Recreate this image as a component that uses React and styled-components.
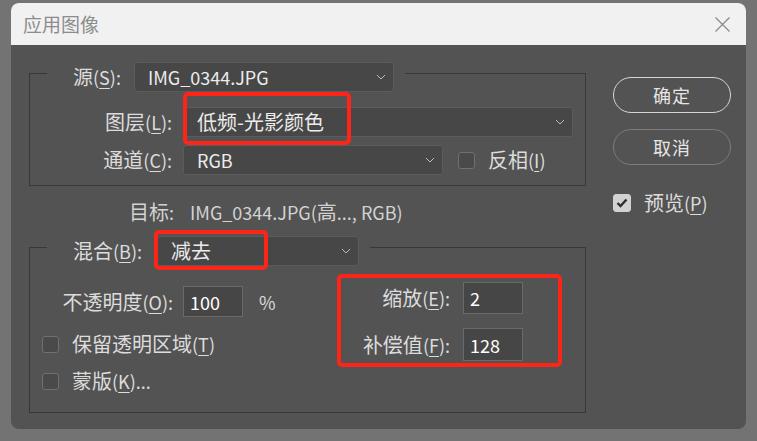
import React from 'react';
import styled, { createGlobalStyle } from 'styled-components';

const GlobalStyle = createGlobalStyle`
    * { box-sizing: border-box; }
    body {
        margin: 0;
        background-color: #737373;
        font-family: "Noto Sans CJK SC", "Noto Sans", sans-serif;
    }
`;

const Page = styled.div`
    width: 757px;
    height: 441px;
    padding: 3px 0 0 11px;
    background-color: #737373;
`;

const Dialog = styled.div`
    width: 735px;
    height: 426px;
    border-radius: 8px;
    overflow: hidden;
    background-color: #535353;
    display: flex;
    flex-direction: column;
`;

const TitleBar = styled.div`
    height: 42px;
    flex: none;
    background-color: #f1f1f1;
    display: flex;
    align-items: center;
    justify-content: space-between;
    padding: 0 16px 0 12px;
    .title {
        font-size: 19px;
        line-height: 24px;
        color: #8c8c8c;
    }
`;

const Body = styled.div`
    flex: 1;
    display: flex;
    padding-left: 18px;
    color: #dcdcdc;
    font-size: 18px;
    line-height: 24px;
`;

/* CJK glyphs run wider than the latin ones in the original */
const Han = styled.span`
    font-size: 20px;
`;

const LeftColumn = styled.div`
    width: 557px;
    display: flex;
    flex-direction: column;
`;

const RightColumn = styled.div`
    width: 118px;
    margin-left: 27px;
    padding-top: 32px;
    display: flex;
    flex-direction: column;
`;

const Group = styled.div`
    border: 1px solid #383838;
    height: ${p => p.$height}px;
    margin-top: ${p => p.$top}px;
    display: flex;
    flex-direction: column;
`;

const GroupHeader = styled.div`
    display: flex;
    align-items: center;
    gap: ${p => p.$gap || 13}px;
    height: 30px;
    width: fit-content;
    margin: -12px 0 0 17px;
    padding: 0 11px 0 26px;
    background-color: #535353;
`;

const Row = styled.div`
    display: grid;
    grid-template-columns: ${p => p.$label}px auto auto;
    column-gap: ${p => p.$gap || 11}px;
    align-items: center;
    justify-content: start;
    margin-top: ${p => p.$top || 0}px;
    .label {
        text-align: right;
        white-space: nowrap;
    }
`;

const Key = styled.u`
    text-underline-offset: 3px;
    text-decoration-thickness: 1px;
`;

const SelectBox = styled.div`
    position: relative;
    width: ${p => p.$width}px;
    height: 30px;
    background-color: #474747;
    border: 1px solid #5b5b5b;
    border-radius: 3px;
    display: flex;
    align-items: center;
    justify-content: space-between;
    padding: 0 7px 0 13px;
    color: #ececec;
    svg { flex: none; }
`;

const Mark = styled.div`
    position: absolute;
    left: ${p => p.$x}px;
    top: ${p => p.$y}px;
    width: ${p => p.$w}px;
    height: ${p => p.$h}px;
    border: 4px solid #ff2418;
    border-radius: 5px;
    pointer-events: none;
`;

const Input = styled.div`
    width: 60px;
    height: ${p => p.$height || 31}px;
    background-color: #464646;
    border: 1px solid #6a6a6a;
    color: #ffffff;
    padding-left: 6px;
    display: flex;
    align-items: center;
`;

const CheckRow = styled.label`
    display: flex;
    align-items: center;
    gap: 13px;
    margin-top: ${p => p.$top || 0}px;
    margin-left: ${p => p.$left || 0}px;
    height: 20px;
`;

const Box = styled.span`
    width: ${p => p.$size || 17}px;
    height: ${p => p.$size || 17}px;
    flex: none;
    border-radius: 3px;
    border: 1px solid ${p => (p.$checked ? '#d2d2d2' : '#707070')};
    background-color: ${p => (p.$checked ? '#d2d2d2' : '#4a4a4a')};
    display: flex;
    align-items: center;
    justify-content: center;
`;

const TargetRow = styled.div`
    display: flex;
    gap: 16px;
    margin-top: 14px;
    padding-left: 100px;
    height: 24px;
    color: #d2d2d2;
`;

const GroupBody = styled.div`
    display: flex;
    align-items: flex-start;
    padding-left: 12px;
`;

const SubColumn = styled.div`
    width: ${p => p.$width}px;
    display: flex;
    flex-direction: column;
    margin-top: ${p => p.$top}px;
`;

const Percent = styled.span`
    margin-left: 6px;
`;

const Frame = styled.div`
    width: 225px;
    border: 4px solid #ff2418;
    border-radius: 5px;
    margin-top: 8px;
    padding: 4px 0 2px;
    display: flex;
    flex-direction: column;
    gap: 14px;
`;

const Button = styled.div`
    height: 36px;
    border-radius: 18px;
    border: 1.5px solid ${p => (p.$primary ? '#d6d6d6' : '#7c7c7c')};
    display: flex;
    align-items: center;
    justify-content: center;
    color: #e6e6e6;
    font-size: 18px;
    letter-spacing: 1px;
    margin-bottom: ${p => p.$bottom || 0}px;
`;

const Chevron = () => (
    <svg width="10" height="6" viewBox="0 0 10 6">
        <path d="M1 1 L5 5 L9 1" fill="none" stroke="#bcbcbc" strokeWidth="1" />
    </svg>
);

const Close = () => (
    <svg width="15" height="15" viewBox="0 0 15 15">
        <path d="M0.5 0.5 L14.5 14.5 M14.5 0.5 L0.5 14.5" stroke="#8a8a8a" strokeWidth="1.3" />
    </svg>
);

const Tick = () => (
    <svg width="12" height="10" viewBox="0 0 12 10">
        <path d="M1.5 5 L4.5 8 L10.5 1.5" fill="none" stroke="#2e2e2e" strokeWidth="2.4" />
    </svg>
);

const Select = ({ width, children, mark }) => (
    <SelectBox $width={width}>
        <span>{children}</span>
        <Chevron />
        {mark && <Mark $x={mark[0]} $y={mark[1]} $w={mark[2]} $h={mark[3]} />}
    </SelectBox>
);

const App = () => {
    return (
        <Page>
            <GlobalStyle />
            <Dialog>
                <TitleBar>
                    <span className="title">应用图像</span>
                    <Close />
                </TitleBar>
                <Body>
                    <LeftColumn>
                        <Group $top={28} $height={113}>
                            <GroupHeader>
                                <span><Han>源</Han>(<Key>S</Key>):</span>
                                <Select width={260}>IMG_0344.JPG</Select>
                            </GroupHeader>
                            <Row $label={142} $top={15}>
                                <span className="label"><Han>图层</Han>(<Key>L</Key>):</span>
                                <Select width={390} mark={[-1, -16, 168, 53]}>
                                    <Han>低频-光影颜色</Han>
                                </Select>
                            </Row>
                            <Row $label={142} $top={8}>
                                <span className="label"><Han>通道</Han>(<Key>C</Key>):</span>
                                <Select width={260}>RGB</Select>
                                <CheckRow $left={4}>
                                    <Box />
                                    <span><Han>反相</Han>(<Key>I</Key>)</span>
                                </CheckRow>
                            </Row>
                        </Group>

                        <TargetRow>
                            <span><Han>目标</Han>:</span>
                            <span>IMG_0344.JPG(<Han>高</Han>..., RGB)</span>
                        </TargetRow>

                        <Group $top={23} $height={166}>
                            <GroupHeader $gap={15}>
                                <span><Han>混合</Han>(<Key>B</Key>):</span>
                                <Select width={202} mark={[-4, -7, 114, 40]}>
                                    <Han>减去</Han>
                                </Select>
                            </GroupHeader>
                            <GroupBody>
                                <SubColumn $width={295} $top={20}>
                                    <Row $label={131} $gap={10}>
                                        <span className="label"><Han>不透明度</Han>(<Key>O</Key>):</span>
                                        <Input>100</Input>
                                        <Percent>%</Percent>
                                    </Row>
                                    <CheckRow $top={17}>
                                        <Box />
                                        <span><Han>保留透明区域</Han>(<Key>T</Key>)</span>
                                    </CheckRow>
                                    <CheckRow $top={17}>
                                        <Box />
                                        <span><Han>蒙版</Han>(<Key>K</Key>)...</span>
                                    </CheckRow>
                                </SubColumn>
                                <Frame>
                                    <Row $label={109} $gap={13}>
                                        <span className="label"><Han>缩放</Han>(<Key>E</Key>):</span>
                                        <Input $height={32}>2</Input>
                                    </Row>
                                    <Row $label={109} $gap={13}>
                                        <span className="label"><Han>补偿值</Han>(<Key>F</Key>):</span>
                                        <Input $height={33}>128</Input>
                                    </Row>
                                </Frame>
                            </GroupBody>
                        </Group>
                    </LeftColumn>

                    <RightColumn>
                        <Button $primary $bottom={16}>确定</Button>
                        <Button $bottom={28}>取消</Button>
                        <CheckRow>
                            <Box $checked $size={18}><Tick /></Box>
                            <span><Han>预览</Han>(<Key>P</Key>)</span>
                        </CheckRow>
                    </RightColumn>
                </Body>
            </Dialog>
        </Page>
    );
};

export default App;
